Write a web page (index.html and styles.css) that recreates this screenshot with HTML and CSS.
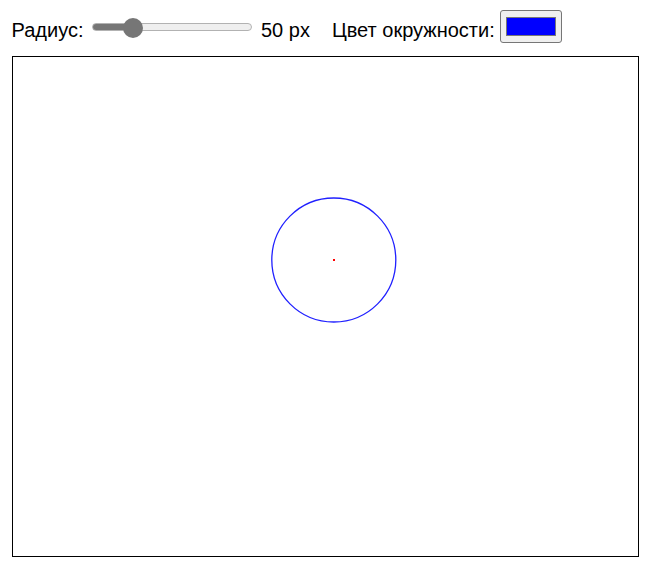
FILE: index.html
```html
<!DOCTYPE html>
<html lang="ru">
<head>
<meta charset="utf-8">
<title>Окружность</title>
<link rel="stylesheet" href="styles.css">
</head>
<body>
<div class="controls">
  <span class="label">Радиус:</span>
  <input class="radius" type="range" min="10" max="200" value="50">
  <span class="label value">50 px</span>
  <span class="label color-label">Цвет окружности:</span>
  <input class="color" type="color" value="#0000ff">
</div>
<svg class="canvas" width="625" height="499" viewBox="0 0 625 499">
  <circle cx="320.8" cy="203" r="62" fill="none" stroke="#2020ff" stroke-width="1.3"/>
  <rect x="320" y="202" width="2" height="2" fill="#ff0000"/>
</svg>
</body>
</html>
```
FILE: styles.css
```css
html, body {
  margin: 0;
  padding: 0;
  background: #ffffff;
}
body {
  font-family: "Liberation Sans", Arial, sans-serif;
  font-size: 20px;
  color: #000000;
}
.controls {
  display: flex;
  align-items: flex-start;
  padding-left: 11.5px;
  height: 43px;
}
.label {
  line-height: 23px;
  margin-top: 18.5px;
  white-space: nowrap;
}
.value {
  margin-left: 8.5px;
}
.color-label {
  margin-left: 22px;
}
.radius {
  -webkit-appearance: none;
  appearance: none;
  width: 160px;
  height: 20px;
  margin: 17px 0 0 9px;
  padding: 0;
  background: transparent;
}
.radius::-webkit-slider-runnable-track {
  height: 8px;
  border: 1px solid #b2b2b2;
  border-radius: 5px;
  background: linear-gradient(to right, #767676 0 39px, #efefef 39px);
}
.radius::-webkit-slider-thumb {
  -webkit-appearance: none;
  appearance: none;
  width: 20px;
  height: 20px;
  border-radius: 50%;
  background: #767676;
  border: none;
  margin-top: -6px;
}
.color {
  -webkit-appearance: none;
  appearance: none;
  box-sizing: border-box;
  width: 62px;
  height: 33px;
  margin: 10px 0 0 5px;
  padding: 6px 5px;
  border: 1px solid #767676;
  border-radius: 3px;
  background: #efefef;
}
.color::-webkit-color-swatch-wrapper {
  padding: 0;
}
.color::-webkit-color-swatch {
  border: 1px solid #777777;
  border-radius: 0;
}
.canvas {
  display: block;
  margin: 13px 0 0 12px;
  border: 1px solid #000000;
  background: #ffffff;
}
```
